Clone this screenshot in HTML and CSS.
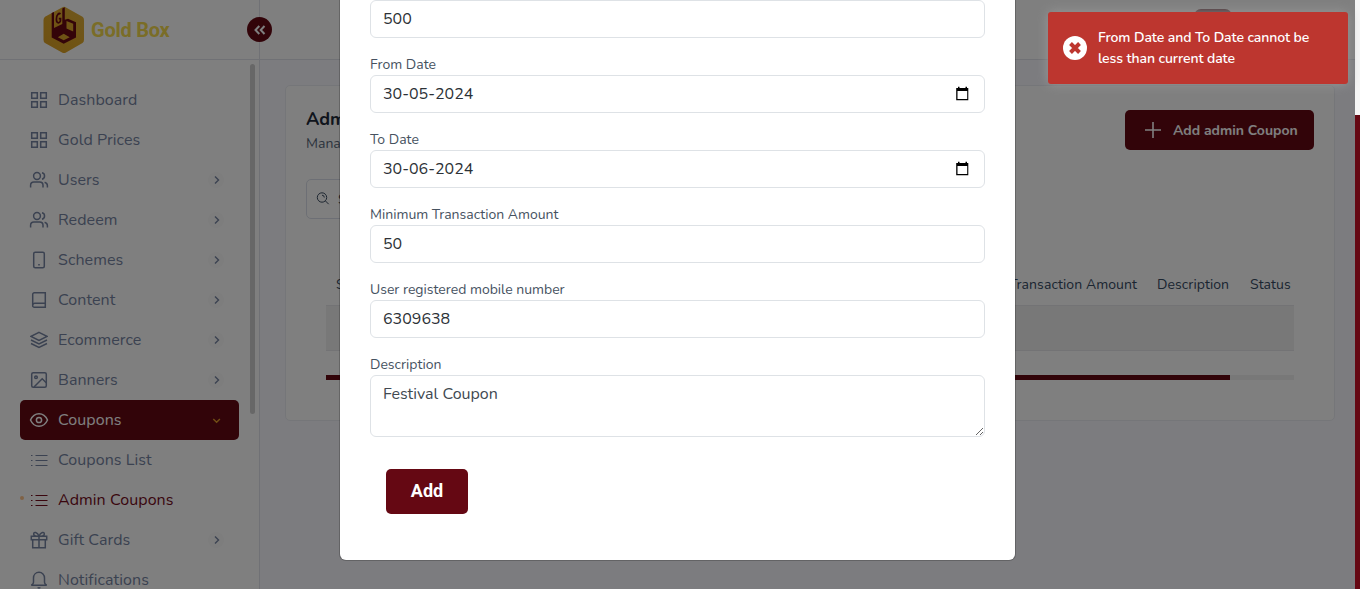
FILE: index.html
```
<!DOCTYPE html>
<html lang="en">
<head>
<meta charset="utf-8">
<title>Gold Box - Admin Coupons</title>
<link rel="stylesheet" href="styles.css">
</head>
<body>
<svg class="defs" width="0" height="0">
  <defs>
    <symbol id="grid" viewBox="0 0 18 18"><path d="M1.700 1.700h5.600v5.600H1.700zM10.700 1.700h5.600v5.600h-5.600zM1.700 10.700h5.600v5.600H1.700zM10.700 10.700h5.600v5.600h-5.600z"/></symbol>
    <symbol id="users" viewBox="0 0 20 18"><circle cx="8" cy="5" r="3.400"/><path d="M1.600 16.500v-2.200c0-2 1.300-3.300 3.300-3.300h5.800c2 0 3.300 1.300 3.300 3.300v2.200M13 1.800c3.400.8 3.400 5.600 0 6.400M15.600 11.200c1.700.5 2.800 1.700 2.800 3.400v1.900"/></symbol>
    <symbol id="tablet" viewBox="0 0 18 18"><rect x="3.700" y="1.300" width="10.600" height="15.400" rx="1.500"/><path d="M8.200 13.700h1.600"/></symbol>
    <symbol id="book" viewBox="0 0 18 18"><path d="M15.300 1.700v14.600H4.300a1.600 1.600 0 0 1-1.600-1.600V3.300a1.600 1.600 0 0 1 1.600-1.600zM3 13.500c.3-.8.800-1.200 1.600-1.200h10.700"/></symbol>
    <symbol id="layers" viewBox="0 0 18 18"><path d="M9 1.300 17 5.300 9 9.300 1 5.300zM1 9l8 4 8-4M1 12.500l8 4 8-4"/></symbol>
    <symbol id="image" viewBox="0 0 18 18"><rect x="1.700" y="1.700" width="14.600" height="14.600" rx="1.500"/><circle cx="6" cy="6.300" r="1.300"/><path d="M4 16l8.200-8.200 4 4"/></symbol>
    <symbol id="eye" viewBox="0 0 20 18"><path d="M1.500 9C3.300 5 6.300 2.700 10 2.700S16.700 5 18.500 9c-1.800 4-4.800 6.300-8.500 6.300S3.300 13 1.500 9z"/><circle cx="10" cy="9" r="2.600"/></symbol>
    <symbol id="list" viewBox="0 0 18 18"><path d="M5.500 4.500h12M5.500 9.500h12M5.500 14.500h12M1 4.500h1.500M1 9.500h1.500M1 14.500h1.500"/></symbol>
    <symbol id="gift" viewBox="0 0 18 18"><path d="M1.300 5.300h15.400v3.500H1.300zM2.700 8.800h12.600v8H2.700zM9 5.300v11.500M9 5.300C7.500 1 3.500.3 3.700 3.200c.1 1.700 2 2.100 5.300 2.100zM9 5.300C10.500 1 14.500.3 14.300 3.200c-.1 1.700-2 2.100-5.300 2.100z"/></symbol>
    <symbol id="bell" viewBox="0 0 18 18"><path d="M1.300 14.200h15.400c-1.600-.8-2.200-1.700-2.200-3V7c0-3.300-2.300-5.700-5.500-5.700S3.500 3.700 3.500 7v4.200c0 1.300-.6 2.200-2.200 3zM7.600 16.500c.9.700 1.900.7 2.800 0"/></symbol>
    <symbol id="right" viewBox="0 0 16 16"><path d="m7 4.500 3.500 3.500L7 11.500"/></symbol>
    <symbol id="down" viewBox="0 0 16 16"><path d="m5.300 7 3.300 3.300L11.900 7"/></symbol>
  </defs>
</svg>

<div class="app">
  <aside class="sidebar">
    <div class="brand">
      <svg class="logo" viewBox="0 0 42 48">
        <defs><linearGradient id="gold" x1="0" y1="1" x2="1" y2="0"><stop offset="0" stop-color="#dca026"/><stop offset=".5" stop-color="#e0a828"/><stop offset="1" stop-color="#dfb03c"/></linearGradient></defs>
        <path d="M19 1.400q2-1.200 4 0l16.500 9.300q1.500 1 1.500 3.400v19.600q0 2.200-1.500 3.400L23 46.500q-2 1.200-4 0L2 37.100Q.500 36 .500 33.700V14.100q0-2.200 1.500-3.400z" fill="url(#gold)"/>
        <path d="M8.700 7v24.500l12 6.200 12.300-6.200V16.300l-8-3.500-3.200 1V1.300L19.300 2.500V18L11 22V6z" fill="#680812"/>
        <path d="M17.500 8c-1.600-1.400-4.100.6-4.100 5.300 0 4.800 4.100 4.300 4.100.6V12.600h-1.700" fill="none" stroke="#680812" stroke-width="1.700"/>
        <path d="m23.500 15 6.700 2.700v7.800l-6.700-3zM14.800 31.300l5.900-3.500 6 3.500-6 3z" fill="#dfa72a"/>
      </svg>
      <span class="brand-name">Gold Box</span>
    </div>
    <div class="sidebar-body">
      <nav class="menu">
        <a class="item"><svg class="icon"><use href="#grid"/></svg><span class="t">Dashboard</span></a>
        <a class="item"><svg class="icon"><use href="#grid"/></svg><span class="t">Gold Prices</span></a>
        <a class="item"><svg class="icon wide"><use href="#users"/></svg><span class="t">Users</span><svg class="chev"><use href="#right"/></svg></a>
        <a class="item"><svg class="icon wide"><use href="#users"/></svg><span class="t">Redeem</span><svg class="chev"><use href="#right"/></svg></a>
        <a class="item"><svg class="icon"><use href="#tablet"/></svg><span class="t">Schemes</span><svg class="chev"><use href="#right"/></svg></a>
        <a class="item"><svg class="icon"><use href="#book"/></svg><span class="t">Content</span><svg class="chev"><use href="#right"/></svg></a>
        <a class="item"><svg class="icon"><use href="#layers"/></svg><span class="t">Ecommerce</span><svg class="chev"><use href="#right"/></svg></a>
        <a class="item"><svg class="icon"><use href="#image"/></svg><span class="t">Banners</span><svg class="chev"><use href="#right"/></svg></a>
        <a class="item open"><svg class="icon wide"><use href="#eye"/></svg><span class="t">Coupons</span><svg class="chev"><use href="#down"/></svg></a>
        <a class="item"><svg class="icon thin"><use href="#list"/></svg><span class="t">Coupons List</span></a>
        <a class="item current"><svg class="icon thin"><use href="#list"/></svg><span class="t">Admin Coupons</span></a>
        <a class="item"><svg class="icon"><use href="#gift"/></svg><span class="t">Gift Cards</span><svg class="chev"><use href="#right"/></svg></a>
        <a class="item"><svg class="icon"><use href="#bell"/></svg><span class="t">Notifications</span></a>
      </nav>
      <div class="side-scroll"></div>
    </div>
    <button class="collapse"><svg viewBox="0 0 14 12" width="14" height="12"><path d="M6.300 2 2.500 6l3.800 4M11.500 2 7.700 6l3.800 4"/></svg></button>
  </aside>

  <main class="main">
    <header class="topbar"><div class="avatar"></div></header>
    <section class="card">
      <div class="card-head">
        <div>
          <h1 class="title">Admin</h1>
          <p class="subtitle">Manage</p>
        </div>
        <button class="add-coupon"><svg viewBox="0 0 16 16" width="16" height="16"><path d="M8 0v16M0 8h16"/></svg><span>Add admin Coupon</span></button>
      </div>
      <div class="search"><svg viewBox="0 0 14 14" width="14" height="14"><circle cx="6" cy="5.500" r="4.700"/><path d="m9.400 8.900 3.300 3.300M6 3.200A2.300 2.300 0 0 1 8.300 5.500"/></svg><span>Search</span></div>
      <div class="table">
        <div class="thead"><span class="first">Sl</span><span class="th-min">Transaction Amount</span><span class="th-desc">Description</span><span class="th-status">Status</span></div>
        <div class="row"></div>
        <div class="hscroll"><div class="hthumb"></div></div>
      </div>
    </section>
  </main>
</div>

<div class="backdrop"></div>

<form class="modal">
  <div class="field"><div class="input">500</div></div>
  <div class="field"><label>From Date</label><div class="input"><span>30-05-2024</span><svg class="cal" viewBox="0 0 15 15"><path d="M3 .8h1.500V2h6V.8H12V2h1.300v12.300H1.200V2H3zM2.500 5v8h9.700V5z" fill-rule="evenodd"/></svg></div></div>
  <div class="field"><label>To Date</label><div class="input"><span>30-06-2024</span><svg class="cal" viewBox="0 0 15 15"><path d="M3 .8h1.500V2h6V.8H12V2h1.300v12.300H1.200V2H3zM2.500 5v8h9.700V5z" fill-rule="evenodd"/></svg></div></div>
  <div class="field"><label>Minimum Transaction Amount</label><div class="input">50</div></div>
  <div class="field"><label>User registered mobile number</label><div class="input">6309638</div></div>
  <div class="field"><label>Description</label><textarea class="area">Festival Coupon</textarea></div>
  <button class="submit" type="button">Add</button>
</form>

<div class="page-scroll"><div class="page-thumb"></div></div>

<div class="toast">
  <svg viewBox="0 0 24 24" width="24" height="24"><circle cx="12" cy="12" r="12" fill="#fff" stroke="none"/><path d="m7.500 7.500 9 9m0-9-9 9" stroke="#bd362f" stroke-width="4"/></svg>
  <p>From Date and To Date cannot be<br>less than current date</p>
</div>
</body>
</html>
```
FILE: styles.css
```
* { box-sizing: border-box; }
body {
  margin: 0;
  height: 589px;
  overflow: hidden;
  background: #f9f9fe;
  color: #3c4d62;
  font-family: Nunito, "Open Sans", "Noto Sans", sans-serif;
  font-size: 14px;
}
button { border: 0; font-family: inherit; padding: 0; }
h1, p { margin: 0; }
svg { fill: none; stroke: currentColor; flex: none; }
.defs { position: absolute; }

.app { display: flex; height: 589px; overflow: hidden; }

.sidebar {
  position: relative;
  width: 260px;
  flex: none;
  background: #fff;
  border-right: 1px solid #e0e2ea;
}
.brand {
  height: 60px;
  display: flex;
  align-items: center;
  gap: 6px;
  padding-left: 43px;
  border-bottom: 1px solid #e0e2ea;
}
.logo { width: 42px; height: 48px; stroke: none; }
.brand-name {
  font: 700 20px Roboto, sans-serif;
  color: #f5da4e;
  letter-spacing: -0.25px;
}
.sidebar-body { display: flex; }
.menu { width: 219px; margin: 20px 11px 0 20px; }
.item {
  display: flex;
  align-items: center;
  height: 40px;
  padding-left: 10px;
  padding-right: 15px;
  color: #7684a2;
  border-radius: 5px;
  font-size: 16px;
}
.icon { width: 18px; height: 18px; margin: -1px 10px 0 0; stroke-width: 1.5; }
.icon.wide { width: 20px; margin: -1px 9px 0 -1px; }
.icon.thin { stroke-width: 1.1; }
.t { line-height: 24px; letter-spacing: 0.07px; }
.chev {
  width: 16px;
  height: 16px;
  margin-left: auto;
  border-radius: 50%;
  background: #fafafa;
  stroke-width: 1.4;
}
.item .chev { margin-top: -1px; }
.item.open { background: #650813; color: #fff; }
.item.open .chev { background: none; color: #e09a28; margin-top: 0; }
.item.current { color: #740c1c; position: relative; }
.item.current::before {
  content: "";
  position: absolute;
  left: 0;
  top: 16px;
  width: 4px;
  height: 4px;
  border-radius: 50%;
  background: #ffc58b;
}
.side-scroll { width: 5px; height: 350px; margin-top: 4px; background: #cfcfcf; border-radius: 3px; }
.collapse {
  position: absolute;
  left: 247px;
  top: 17px;
  width: 25px;
  height: 25px;
  border-radius: 50%;
  background: #650813;
  color: #fff;
  display: grid;
  place-items: center;
  z-index: 2;
}
.collapse svg { stroke-width: 2; }

.main { flex: 1; }
.topbar {
  height: 60px;
  background: #fff;
  border-bottom: 1px solid #e0e2ea;
  padding: 9px 128px 0 0;
}
.avatar { width: 38px; height: 38px; margin-left: auto; border-radius: 7px; background: #85535a; }
.card {
  width: 1050px;
  height: 336px;
  margin: 25px 0 0 25px;
  padding: 24px 20px 0;
  background: #fff;
  border: 1px solid #ebedf3;
  border-radius: 5px;
}
.card-head { display: flex; justify-content: space-between; height: 69px; }
.title { font-size: 18px; line-height: 19px; font-weight: 700; color: #1f2b3a; }
.subtitle { font-size: 14px; line-height: 24px; margin-top: 3px; color: #59697b; }
.add-coupon {
  width: 189px;
  height: 40px;
  display: flex;
  align-items: center;
  padding-left: 20px;
  gap: 12px;
  border-radius: 5px;
  background: #650813;
  color: #fff;
  font-size: 14px;
  font-weight: 700;
}
.add-coupon svg { stroke-width: 1.6; }
.search {
  display: flex;
  align-items: center;
  gap: 8px;
  width: 240px;
  height: 40px;
  padding-left: 9px;
  border: 1px solid #dbdfea;
  border-radius: 5px;
}
.table { margin: 46px 20px 0; }
.thead { display: flex; height: 40px; line-height: 40px; color: #364a63; letter-spacing: 0.07px; }
.first { margin-left: 10px; }
.th-min { margin-left: auto; margin-right: 20px; }
.th-desc { width: 73px; margin-right: 20px; }
.th-status { width: 41px; margin-right: 3px; }
.row { height: 46px; background: #f1f1f1; border-top: 1px solid #e6e7eb; border-bottom: 1px solid #e6e7eb; }
.hscroll { height: 5px; margin-top: 24px; background: #f1f1f1; }
.hthumb { width: 904px; height: 5px; background: #650813; }

.backdrop { position: absolute; inset: 0; background: rgba(0, 0, 0, 0.5); z-index: 3; }

.modal {
  position: absolute;
  z-index: 4;
  left: 340px;
  top: 0;
  width: 675px;
  height: 560px;
  padding: 0 30px;
  background: #fff;
  border-radius: 0 0 6px 6px;
  box-shadow: 0 0 0 1px rgba(0, 0, 0, 0.2);
}
.field label { display: block; height: 37px; padding-top: 16px; line-height: 21px; color: #46525f; }
.input {
  display: flex;
  align-items: center;
  justify-content: space-between;
  height: 38px;
  padding: 0 12px;
  border: 1px solid #dee2e6;
  border-radius: 6px;
  font-size: 16px;
  color: #2c3136;
}
.cal { width: 15px; height: 15px; margin: -2px 2px 0 0; fill: #000; stroke: none; }
.area {
  display: block;
  width: 615px;
  height: 62px;
  padding: 6px 12px;
  border: 1px solid #dee2e6;
  border-radius: 6px;
  font: 16px/24px Nunito, "Open Sans", sans-serif;
  color: #414951;
  resize: vertical;
}
.submit {
  display: block;
  width: 82px;
  height: 45px;
  margin: 32px 0 0 16px;
  padding-bottom: 2px;
  border-radius: 5px;
  background: #650813;
  color: #fff;
  font: 700 18px Roboto, sans-serif;
}

.page-scroll { position: absolute; z-index: 5; right: 0; top: 0; width: 5px; height: 589px; background: #f5f5f5; padding-top: 115px; }
.page-thumb { height: 474px; background: #650813; }

.toast {
  position: absolute;
  z-index: 6;
  left: 1048px;
  top: 12px;
  width: 300px;
  height: 72px;
  display: flex;
  align-items: center;
  gap: 11px;
  padding: 0 15px;
  background: #bd362f;
  border-radius: 3px;
  box-shadow: 0 0 12px #999;
  color: #fff;
  font-size: 14px;
  font-weight: 600;
  letter-spacing: -0.1px;
  line-height: 21px;
  white-space: nowrap;
}
```
